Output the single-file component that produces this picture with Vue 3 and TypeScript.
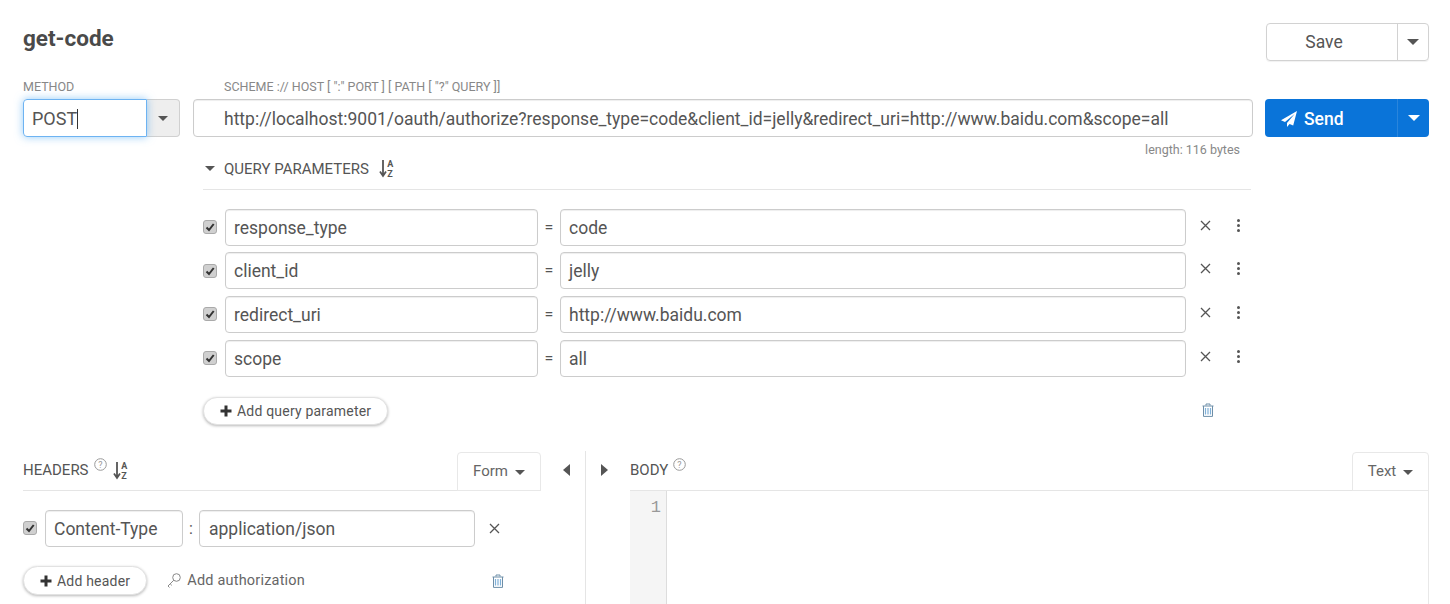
<script setup lang="ts">
interface Param {
  name: string
  value: string
}

const params: Param[] = [
  { name: 'response_type', value: 'code' },
  { name: 'client_id', value: 'jelly' },
  { name: 'redirect_uri', value: 'http://www.baidu.com' },
  { name: 'scope', value: 'all' }
]
</script>

<template>
  <div class="page">
    <header class="top">
      <h1 class="title">get-code</h1>
      <div class="save">
        <span class="save-main">Save</span>
        <span class="save-more"><i class="caret dark"></i></span>
      </div>
    </header>

    <div class="request">
      <div class="method">
        <div class="label">METHOD</div>
        <div class="method-box">
          <div class="method-input">POST<i class="cursor"></i></div>
          <span class="method-more"><i class="caret dark method-caret"></i></span>
        </div>
      </div>
      <div class="url">
        <div class="label url-label">SCHEME :// HOST [ ":" PORT ] [ PATH [ "?" QUERY ]]</div>
        <div class="field url-input">http://localhost:9001/oauth/authorize?response_type=code&amp;client_id=jelly&amp;redirect_uri=http://www.baidu.com&amp;scope=all</div>
        <div class="length">length: 116 bytes</div>
      </div>
      <div class="send">
        <span class="send-main">
          <svg class="plane" width="16" height="16" viewBox="0 0 16 16"><path fill="#fff" d="M16 0 0 9.2l4 1.7L13.6 3 6 11.9V16l2.6-3.1 3.6 1.5z" /></svg>
          Send
        </span>
        <span class="send-more"><i class="caret light"></i></span>
      </div>
    </div>

    <section class="query">
      <div class="query-head">
        <i class="caret dark small-caret"></i>
        <span class="section-name">QUERY PARAMETERS</span>
        <svg class="sort" width="15" height="19" viewBox="0 0 15 19">
          <path d="M4 1v15M1 12.5 4 17l3-4.5" fill="none" stroke="#555" stroke-width="1.8" />
          <text x="8.2" y="8" class="sort-text">A</text>
          <text x="8.2" y="17.5" class="sort-text">Z</text>
        </svg>
      </div>
      <div class="rows">
        <div v-for="p in params" :key="p.name" class="row">
          <span class="check">
            <svg width="10" height="10" viewBox="0 0 10 10"><path d="M1.5 5.5 4 8l4.7-6" fill="none" stroke="#333" stroke-width="2" /></svg>
          </span>
          <div class="field name">{{ p.name }}</div>
          <span class="sep">=</span>
          <div class="field value">{{ p.value }}</div>
          <svg class="remove" width="11" height="11" viewBox="0 0 11 11"><path d="M1 1l9 9M10 1l-9 9" stroke="#555" stroke-width="1.3" /></svg>
          <span class="dots"><i></i><i></i><i></i></span>
        </div>
      </div>
      <div class="query-actions">
        <button class="pill">
          <svg width="12" height="12" viewBox="0 0 12 12"><path d="M6 .5v11M.5 6h11" stroke="#333" stroke-width="3" /></svg>
          Add query parameter
        </button>
        <svg class="trash query-trash" width="12" height="14" viewBox="0 0 12 14">
          <path d="M4 2.5V1h4v1.5M.5 3h11M1.5 3v10.4h9V3" fill="none" stroke="#6d8ea8" />
          <path d="M3.5 5v6.5M6 5v6.5M8.5 5v6.5" stroke="#7fb0d8" stroke-width="1.2" />
        </svg>
      </div>
    </section>

    <div class="panels">
      <section class="headers">
        <div class="panel-head">
          <span class="section-name">HEADERS</span>
          <svg class="help" width="13" height="13" viewBox="0 0 13 13">
            <circle cx="6.5" cy="6.5" r="5.8" fill="none" stroke="#999" />
            <text x="6.5" y="9.6" class="help-text">?</text>
          </svg>
          <svg class="sort" width="15" height="19" viewBox="0 0 15 19">
            <path d="M4 1v15M1 12.5 4 17l3-4.5" fill="none" stroke="#555" stroke-width="1.8" />
            <text x="8.2" y="8" class="sort-text">A</text>
            <text x="8.2" y="17.5" class="sort-text">Z</text>
          </svg>
          <span class="tab">Form <i class="caret dark tab-caret"></i></span>
        </div>
        <div class="row header-row">
          <span class="check">
            <svg width="10" height="10" viewBox="0 0 10 10"><path d="M1.5 5.5 4 8l4.7-6" fill="none" stroke="#333" stroke-width="2" /></svg>
          </span>
          <div class="field header-name">Content-Type</div>
          <span class="colon">:</span>
          <div class="field header-value">application/json</div>
          <svg class="remove header-remove" width="11" height="11" viewBox="0 0 11 11"><path d="M1 1l9 9M10 1l-9 9" stroke="#555" stroke-width="1.3" /></svg>
        </div>
        <div class="header-actions">
          <button class="pill">
            <svg width="12" height="12" viewBox="0 0 12 12"><path d="M6 .5v11M.5 6h11" stroke="#333" stroke-width="3" /></svg>
            Add header
          </button>
          <span class="auth">
            <svg width="14" height="15" viewBox="0 0 14 15" fill="none" stroke="#888">
              <circle cx="9.5" cy="4.5" r="3.8" />
              <path d="M6.8 7.2 1 13l1.5 1.5M3.2 10.8l1.6 1.6" />
            </svg>
            Add authorization
          </span>
          <svg class="trash" width="12" height="14" viewBox="0 0 12 14">
            <path d="M4 2.5V1h4v1.5M.5 3h11M1.5 3v10.4h9V3" fill="none" stroke="#6d8ea8" />
            <path d="M3.5 5v6.5M6 5v6.5M8.5 5v6.5" stroke="#7fb0d8" stroke-width="1.2" />
          </svg>
        </div>
      </section>

      <div class="splitter">
        <i class="arrow left"></i>
        <span class="split-line"></span>
        <i class="arrow right"></i>
      </div>

      <section class="body-panel">
        <div class="panel-head body-head">
          <span class="section-name">BODY</span>
          <svg class="help" width="13" height="13" viewBox="0 0 13 13">
            <circle cx="6.5" cy="6.5" r="5.8" fill="none" stroke="#999" />
            <text x="6.5" y="9.6" class="help-text">?</text>
          </svg>
          <span class="tab text-tab">Text <i class="caret dark tab-caret"></i></span>
        </div>
        <div class="editor">
          <div class="gutter">1</div>
        </div>
      </section>
    </div>
  </div>
</template>

<style scoped>
.page {
  width: 1450px;
  height: 604px;
  box-sizing: border-box;
  padding: 23px 21px 0 23px;
  overflow: hidden;
  background: #fff;
  color: #555;
  font-family: Roboto, "Liberation Sans", sans-serif;
}
.top {
  display: flex;
  justify-content: space-between;
  height: 38px;
}
.title {
  margin: 0;
  font-size: 22.5px;
  line-height: 30px;
  font-weight: 700;
  color: #4a4a4a;
}
.save {
  display: flex;
  width: 163px;
  height: 38px;
  box-sizing: border-box;
  border: 1px solid #d2d2d2;
  border-radius: 4px;
  box-shadow: 0 1px 1px rgba(0, 0, 0, 0.06);
  font-size: 17.5px;
}
.save-main {
  width: 131px;
  flex: none;
  box-sizing: border-box;
  padding-right: 16px;
  text-align: center;
  line-height: 36px;
  border-right: 1px solid #d2d2d2;
}
.save-more {
  flex: 1;
  display: flex;
  align-items: center;
  justify-content: center;
}
.caret {
  display: inline-block;
  width: 0;
  height: 0;
  border-left: 6px solid transparent;
  border-right: 6px solid transparent;
}
.caret.dark {
  border-top: 6px solid #555;
}
.caret.light {
  border-top: 6px solid #fff;
}
.method-caret {
  border-left-width: 5px;
  border-right-width: 5px;
  border-top-width: 5px !important;
}
.request {
  display: flex;
  margin-top: 19px;
  align-items: flex-start;
}
.label {
  height: 19px;
  font-size: 12.5px;
  line-height: 14px;
  color: #888;
}
.method {
  width: 157px;
  margin-right: 13px;
}
.method-box {
  display: flex;
  height: 38px;
}
.method-input {
  width: 124px;
  box-sizing: border-box;
  border: 1px solid #6db3f2;
  border-radius: 4px 0 0 4px;
  box-shadow: 0 0 8px rgba(64, 160, 240, 0.55);
  padding-left: 8px;
  font-size: 18px;
  line-height: 37px;
  position: relative;
  z-index: 1;
}
.cursor {
  display: inline-block;
  width: 1px;
  height: 20px;
  background: #333;
  vertical-align: -4px;
}
.method-more {
  width: 33px;
  box-sizing: border-box;
  border: 1px solid #d0d0d0;
  border-left: 0;
  border-radius: 0 4px 4px 0;
  background: #eee;
  display: flex;
  align-items: center;
  justify-content: center;
}
.field {
  box-sizing: border-box;
  border: 1px solid #ccc;
  border-radius: 4px;
  background: #fff;
  box-shadow: inset 0 1px 1px rgba(0, 0, 0, 0.07);
  font-size: 17.5px;
  white-space: nowrap;
  overflow: hidden;
}
.url {
  width: 1060px;
  margin-right: 12px;
}
.url-label {
  padding-left: 31px;
}
.url-input {
  height: 38px;
  line-height: 38px;
  padding-left: 30px;
}
.length {
  font-size: 12.5px;
  line-height: 14px;
  margin-top: 6px;
  padding-right: 13px;
  text-align: right;
  color: #888;
}
.send {
  display: flex;
  width: 164px;
  height: 38px;
  margin-top: 19px;
  background: #0a74d9;
  border-radius: 4px;
  color: #fff;
  font-size: 17.5px;
  font-weight: 500;
}
.send-main {
  flex: 1;
  display: flex;
  align-items: center;
  gap: 7px;
  padding: 1px 0 0 16px;
  border-right: 1px solid #2a85dc;
}
.plane {
  flex: none;
}
.send-more {
  width: 31px;
  display: flex;
  align-items: center;
  justify-content: center;
}
.query {
  margin-left: 180px;
  width: 1048px;
}
.query-head {
  height: 34px;
  margin-top: -1px;
  padding-bottom: 8px;
  box-sizing: border-box;
  display: flex;
  align-items: center;
  border-bottom: 1px solid #e5e5e5;
}
.small-caret {
  border-left-width: 5px;
  border-right-width: 5px;
  border-top-width: 5px !important;
  margin: 0 9px 0 2px;
}
.section-name {
  font-size: 15px;
  color: #555;
}
.sort {
  margin-left: 10px;
  flex: none;
}
.panel-head .sort {
  margin-left: 6px;
}
.sort-text {
  font-family: Roboto, sans-serif;
  font-size: 9px;
  font-weight: 700;
  fill: #555;
}
.rows {
  margin-top: 18.8px;
  display: flex;
  flex-direction: column;
  gap: 6.6px;
}
.row {
  display: flex;
  align-items: center;
}
.check {
  width: 14px;
  height: 14px;
  box-sizing: border-box;
  flex: none;
  border: 1px solid #aaa;
  border-radius: 3px;
  background: #d0d0d0;
  display: flex;
  align-items: center;
  justify-content: center;
  margin-right: 8px;
}
.name {
  width: 313px;
  height: 37px;
  line-height: 36px;
  padding-left: 8px;
}
.sep {
  width: 22px;
  text-align: center;
  font-size: 16px;
}
.value {
  width: 626px;
  height: 37px;
  line-height: 36px;
  padding-left: 8px;
}
.remove {
  flex: none;
  margin: -4px 0 0 14px;
}
.dots {
  display: flex;
  flex-direction: column;
  gap: 2px;
  margin: -4px 0 0 26px;
}
.dots i {
  display: block;
  width: 3px;
  height: 3px;
  border-radius: 50%;
  background: #555;
}
.query-actions {
  display: flex;
  align-items: center;
  justify-content: space-between;
  margin-top: 20px;
  height: 28px;
}
.pill {
  height: 28px;
  padding: 0 16px;
  display: inline-flex;
  align-items: center;
  gap: 5px;
  border: 1px solid #e2e2e2;
  border-radius: 14px;
  background: #fff;
  box-shadow: 0 1px 3px rgba(0, 0, 0, 0.28);
  font-family: inherit;
  font-size: 14px;
  letter-spacing: 0.2px;
  color: #555;
}
.query-trash {
  margin: -2px 37px 0 0;
}
.panels {
  display: flex;
  margin-top: 26px;
  height: 160px;
}
.headers {
  width: 518px;
  flex: none;
}
.panel-head {
  position: relative;
  height: 40px;
  display: flex;
  align-items: center;
  border-bottom: 1px solid #e5e5e5;
  box-sizing: border-box;
}
.help {
  margin: -11px 0 0 5px;
}
.tab {
  position: absolute;
  right: 0;
  bottom: -1px;
  width: 84px;
  height: 39px;
  box-sizing: border-box;
  border: 1px solid #e8e8e8;
  border-radius: 4px 4px 0 0;
  display: flex;
  align-items: center;
  justify-content: center;
  font-size: 15px;
  color: #666;
}
.tab-caret {
  border-left-width: 5px;
  border-right-width: 5px;
  border-top-width: 5px !important;
  margin: 3px 0 0 7px;
}
.help-text {
  font-family: Roboto, sans-serif;
  font-size: 9px;
  fill: #999;
  text-anchor: middle;
}
.header-row {
  margin-top: 19px;
}
.header-name {
  width: 138px;
  height: 37.67px;
  line-height: 36px;
  padding-left: 8px;
}
.colon {
  width: 16px;
  text-align: center;
  font-size: 16px;
}
.header-value {
  width: 276px;
  height: 37.67px;
  line-height: 36px;
  padding-left: 9px;
}
.header-remove {
  margin-top: 0;
}
.header-actions {
  display: flex;
  align-items: center;
  margin-top: 19px;
}
.header-actions .pill {
  height: 29px;
  border-radius: 15px;
}
.auth {
  display: inline-flex;
  align-items: center;
  gap: 6px;
  margin-left: 20px;
  font-size: 14.5px;
  letter-spacing: 0.2px;
  color: #666;
}
.header-actions .trash {
  margin-left: 187px;
}
.splitter {
  flex: none;
  width: 89px;
  display: flex;
  justify-content: center;
  position: relative;
}
.split-line {
  position: absolute;
  left: 44px;
  top: 0;
  bottom: 0;
  width: 1px;
  background: #e5e5e5;
}
.arrow {
  position: absolute;
  top: 13px;
  width: 0;
  height: 0;
  border-top: 6px solid transparent;
  border-bottom: 6px solid transparent;
}
.arrow.left {
  left: 22px;
  border-right: 7px solid #555;
}
.arrow.right {
  left: 60px;
  border-left: 7px solid #555;
}
.body-panel {
  flex: 1;
}
.text-tab {
  width: 77px;
}
.body-head {
  border-bottom: 1px solid #e5e5e5;
}
.editor {
  height: 120px;
  border-right: 1px solid #e8e8e8;
}
.gutter {
  width: 37px;
  height: 100%;
  box-sizing: border-box;
  background: #f5f5f5;
  border-right: 1px solid #ddd;
  text-align: right;
  padding: 7px 5px 0 0;
  font-family: "Liberation Mono", monospace;
  font-size: 17px;
  color: #999;
}
</style>
